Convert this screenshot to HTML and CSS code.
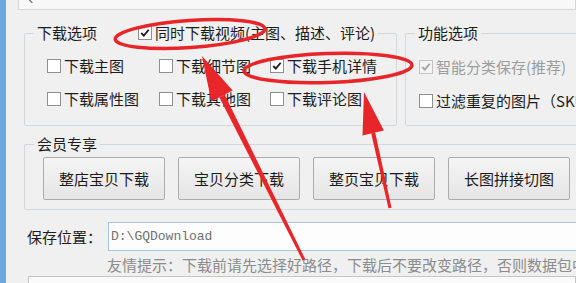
FILE: index.html
```html
<!DOCTYPE html>
<html lang="zh-CN">
<head>
  <meta charset="UTF-8">
  <title>下载设置</title>
  <link rel="stylesheet" href="styles.css">
</head>
<body>

  <div class="window">
    <div class="edge"></div>

    <div class="content">
      <div class="toppanel"><span class="chev"></span></div>

      <div class="options">
        <!-- 下载选项 -->
        <fieldset class="group dl">
          <legend>
            <span class="title">下载选项</span>
            <label class="check on first"><span class="box"><svg viewBox="0 0 13 13"><path d="M2.5 6.5 L5.2 9.3 L10.5 3"/></svg></span>同时下载视频(主图、描述、评论)</label>
          </legend>
          <div class="grid">
            <label class="check"><span class="box"></span>下载主图</label>
            <label class="check"><span class="box"></span>下载细节图</label>
            <label class="check on"><span class="box"><svg viewBox="0 0 13 13"><path d="M2.5 6.5 L5.2 9.3 L10.5 3"/></svg></span>下载手机详情</label>
            <label class="check"><span class="box"></span>下载属性图</label>
            <label class="check"><span class="box"></span>下载其他图</label>
            <label class="check"><span class="box"></span>下载评论图</label>
          </div>
        </fieldset>

        <!-- 功能选项 -->
        <fieldset class="group fn">
          <legend><span class="title">功能选项</span></legend>
          <div class="col">
            <label class="check on disabled"><span class="box"><svg viewBox="0 0 13 13"><path d="M2.5 6.5 L5.2 9.3 L10.5 3"/></svg></span>智能分类保存(推荐)</label>
            <label class="check"><span class="box"></span>过滤重复的图片（SKU图）</label>
          </div>
        </fieldset>
      </div>

      <!-- 会员专享 -->
      <fieldset class="group vip">
        <legend><span class="title">会员专享</span></legend>
        <div class="buttons">
          <button>整店宝贝下载</button>
          <button>宝贝分类下载</button>
          <button>整页宝贝下载</button>
          <button>长图拼接切图</button>
        </div>
      </fieldset>

      <div class="save">
        <span class="label">保存位置：</span>
        <div class="path">D:\GQDownload</div>
      </div>
      <p class="hint">友情提示：下载前请先选择好路径，下载后不要改变路径，否则数据包中</p>
      <div class="log"></div>
    </div>

    <!-- 标注 -->
    <svg class="marks" viewBox="0 0 576 283">
      <ellipse cx="190" cy="34" rx="75" ry="13.5" transform="rotate(-4 190 34)"/>
      <ellipse cx="328" cy="68" rx="84" ry="14.5" transform="rotate(-2 328 68)"/>
      <polygon class="arrow" points="302.7,260.7 305.3,259.3 224.7,94.7 219.3,97.3"/>
      <polygon class="arrow" points="202,56 232.7,90.6 211.3,101.4"/>
      <polygon class="arrow" points="388.5,208.3 391.5,207.7 375.2,132.6 371.2,133.4"/>
      <polygon class="arrow" points="364,92 383.9,130.6 362.5,135.4"/>
    </svg>
  </div>

</body>
</html>
```

FILE: styles.css
```css
body { margin: 0; font-family: "Noto Sans CJK SC", "Noto Sans", sans-serif; font-size: 15px; color: #1c1c1c; background: #f0f0f0; }
.window { position: relative; display: flex; width: 576px; height: 283px; overflow: hidden; }
.edge { flex: none; width: 6px; background: #6ea7df; }
.content { flex: 1; min-width: 0; overflow: hidden; }

.toppanel { height: 9px; margin-left: 12px; border: 1px solid #d6d6d6; border-top: none; background: #f8f8f8; position: relative; }
.chev { position: absolute; left: 10px; top: -4px; width: 5px; height: 5px; border-left: 1.5px solid #555; border-bottom: 1.5px solid #555; transform: rotate(45deg); }

.options { display: flex; gap: 8px; margin: 14px 0 0 18px; }
.group { margin: 0; padding: 0; border: 1px solid #d3d8dc; border-radius: 2px; min-width: 0; }
.group legend { margin-left: 9px; padding: 0 3px; line-height: 18px; display: flex; align-items: center; white-space: nowrap; }
.title { flex: none; }
.dl { flex: none; width: 373px; box-sizing: border-box; padding-bottom: 15px; }
.fn { flex: none; width: 220px; box-sizing: border-box; padding-bottom: 15px; }

.check { flex: none; display: flex; align-items: center; gap: 3px; line-height: 18px; white-space: nowrap; }
.check.first { margin-left: 41px; }
.box { flex: none; width: 14px; height: 14px; box-sizing: border-box; border: 1px solid #8e8f8f; background: #fff; display: flex; align-items: center; justify-content: center; }
.box svg { width: 12px; height: 12px; }
.box path { fill: none; stroke: #1c1c1c; stroke-width: 2; }
.disabled { color: #9c9c9c; }
.disabled .box { border-color: #c2c2c2; background: #f3f3f3; }
.disabled .box path { stroke: #a4a4a4; }

.grid { display: grid; grid-template-columns: 112px 111px auto; row-gap: 15px; margin-top: 15px; padding-left: 22px; }
.col { display: flex; flex-direction: column; gap: 16px; margin-top: 16px; padding-left: 13px; }

.vip { margin: 9px 0 0 18px; width: 600px; padding-bottom: 9px; }
.buttons { display: flex; gap: 13px; margin-top: 4px; padding-left: 18px; }
.buttons button { flex: none; width: 122px; height: 43px; padding: 0; font-family: inherit; font-size: 15px; color: #1a1a1a; background: linear-gradient(#f5f5f5, #e5e5e5); border: 1px solid #acacac; border-radius: 2px; }

.save { display: flex; align-items: center; margin: 12px 0 0 21px; }
.label { width: 81px; flex: none; }
.path { flex: none; width: 500px; height: 29px; box-sizing: border-box; border: 1px solid #a9c3e0; background: #fdfdfd; padding-left: 2px; font-family: "Liberation Mono", monospace; font-size: 13px; line-height: 27px; color: #707070; }

.hint { margin: 5px 0 0; padding-left: 101px; line-height: 18px; color: #8c8c8c; white-space: nowrap; }
.log { margin: 2px 0 0 22px; height: 20px; border: 1px solid #c6c6c6; background: #fafafa; }

.marks { position: absolute; left: 0; top: 0; width: 576px; height: 283px; pointer-events: none; }
.marks ellipse { fill: none; stroke: #e8262a; stroke-width: 3.5; }
.marks .arrow { fill: #e8262a; }
```
